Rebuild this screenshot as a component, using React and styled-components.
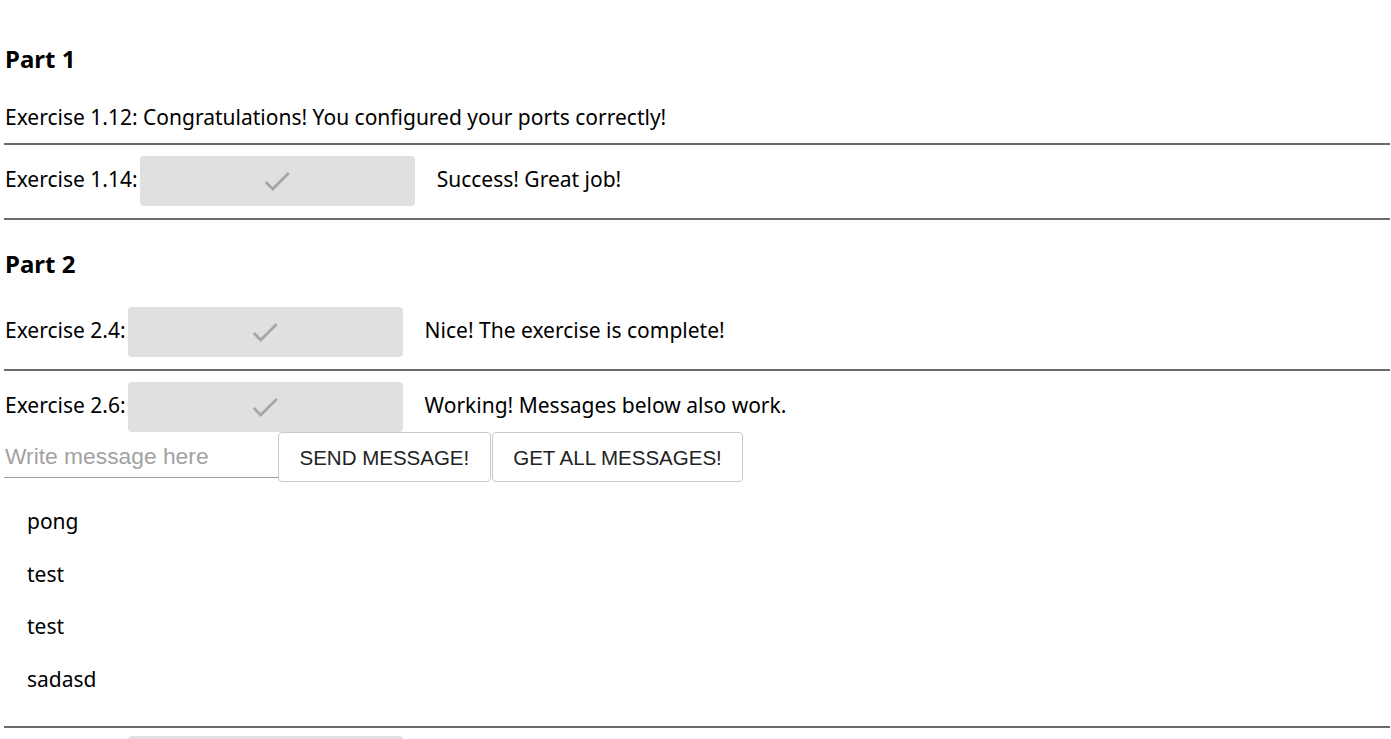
import React from "react";
import styled, { createGlobalStyle } from "styled-components";

const GlobalStyle = createGlobalStyle`
  body {
    margin: 0;
    background: #fff;
    color: #000;
    font-family: "Noto Sans", "Open Sans", sans-serif;
  }
`;

const Page = styled.div`
  padding: 0 1px 0 4px;
`;

const PartTitle = styled.h2`
  margin: 0;
  padding-left: 1px;
  font-size: 24px;
  font-weight: 700;
  line-height: 30px;
  height: ${(p) => p.$height}px;
  display: flex;
  align-items: ${(p) => p.$align || "center"};
`;

const Line = styled.div`
  height: 2px;
  background: #6b6b6b;
  margin: ${(p) => p.$margin || "11px 0"};
`;

const Row = styled.div`
  display: flex;
  align-items: center;
  height: ${(p) => p.$height || 50}px;
  font-size: 21px;
  padding-left: 1px;
  line-height: 1;
`;

const Text = styled.span`
  padding-bottom: ${(p) => (p.$flat ? 0 : 4)}px;
`;

const Label = styled(Text)`
  margin-right: 2px;
`;

const DoneButton = styled.button`
  width: 275px;
  height: 50px;
  border: none;
  border-radius: 4px;
  background: #e0e0e0;
  display: flex;
  align-items: center;
  justify-content: center;
  margin-right: 22px;
  padding: 0;
  cursor: default;
`;

const InputRow = styled.div`
  display: flex;
  align-items: stretch;
  height: 50px;
`;

const MessageInput = styled.input`
  width: 274px;
  box-sizing: border-box;
  border: none;
  border-bottom: 1px solid #9e9e9e;
  margin-bottom: 4px;
  padding: 3px 0 0 1px;
  font-family: "Liberation Sans", Arial, sans-serif;
  font-size: 22.8px;
  color: #222;
  outline: none;
  background: transparent;
  &::placeholder {
    color: #a2a2a2;
  }
`;

const ActionButton = styled.button`
  box-sizing: border-box;
  height: 50px;
  padding: 1px 20.5px 0;
  margin-right: 1px;
  background: #fff;
  border: 1px solid #c8c8c8;
  border-radius: 4px;
  font-family: "Liberation Sans", Arial, sans-serif;
  font-size: 20.5px;
  color: #222;
  text-transform: uppercase;
`;

const MessageList = styled.ul`
  list-style: none;
  margin: 13px 0 0;
  padding: 0 0 0 23px;
  font-size: 21px;
`;

const MessageItem = styled.li`
  height: 52.5px;
  line-height: 52.5px;
`;

function Check() {
  return (
    <svg width="34" height="34" viewBox="0 0 24 24" fill="rgba(0,0,0,0.26)">
      <path d="M9 16.17 4.83 12l-1.42 1.41L9 19 21 7l-1.41-1.41z" />
    </svg>
  );
}

function Exercise({ label, message }) {
  return (
    <Row>
      <Label>{label}</Label>
      <DoneButton disabled>
        <Check />
      </DoneButton>
      <Text>{message}</Text>
    </Row>
  );
}

const messages = ["pong", "test", "test", "sadasd"];

export default function App() {
  return (
    <Page>
      <GlobalStyle />
      <PartTitle $height={92} $align="flex-end">
        <span style={{ marginBottom: 18 }}>Part 1</span>
      </PartTitle>
      <Row $height={51}>
        <Text $flat>
          Exercise 1.12: Congratulations! You configured your ports correctly!
        </Text>
      </Row>
      <Line $margin="0 0 11px" />
      <Exercise label="Exercise 1.14:" message="Success! Great job!" />
      <Line $margin="12px 0 0" />
      <PartTitle $height={87}>Part 2</PartTitle>
      <Exercise label="Exercise 2.4:" message="Nice! The exercise is complete!" />
      <Line $margin="12px 0 11px" />
      <Exercise label="Exercise 2.6:" message="Working! Messages below also work." />
      <InputRow>
        <MessageInput placeholder="Write message here" />
        <ActionButton>Send message!</ActionButton>
        <ActionButton>Get all messages!</ActionButton>
      </InputRow>
      <MessageList>
        {messages.map((m, i) => (
          <MessageItem key={i}>{m}</MessageItem>
        ))}
      </MessageList>
      <Line $margin="21px 0 8px" />
      <Exercise label="Exercise 2.8:" message="" />
    </Page>
  );
}
